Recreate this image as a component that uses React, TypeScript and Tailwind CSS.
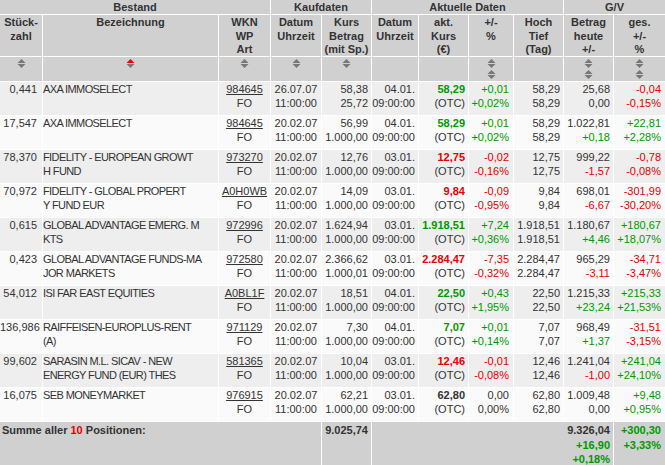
import React from "react";

type C = "g" | "r" | "d";
const col = (c?: C) =>
  c === "g" ? "text-[#009900]" : c === "r" ? "text-[#e60000]" : "text-[#333333]";

type Row = {
  n: string;
  name: string[];
  wkn: string;
  d1: string;
  k: [string, string];
  d2: string;
  akt: [string, C];
  ch: [string, string, C];
  hl: [string, string];
  bh: [string, C, string, C];
  ges: [string, string, C];
};

const rows: Row[] = [
  { n: "0,441", name: ["AXA IMMOSELECT"], wkn: "984645", d1: "26.07.07", k: ["58,38", "25,72"], d2: "04.01.", akt: ["58,29", "g"], ch: ["+0,01", "+0,02%", "g"], hl: ["58,29", "58,29"], bh: ["25,68", "d", "0,00", "d"], ges: ["-0,04", "-0,15%", "r"] },
  { n: "17,547", name: ["AXA IMMOSELECT"], wkn: "984645", d1: "20.02.07", k: ["56,99", "1.000,00"], d2: "04.01.", akt: ["58,29", "g"], ch: ["+0,01", "+0,02%", "g"], hl: ["58,29", "58,29"], bh: ["1.022,81", "d", "+0,18", "g"], ges: ["+22,81", "+2,28%", "g"] },
  { n: "78,370", name: ["FIDELITY - EUROPEAN GROWT", "H FUND"], wkn: "973270", d1: "20.02.07", k: ["12,76", "1.000,00"], d2: "03.01.", akt: ["12,75", "r"], ch: ["-0,02", "-0,16%", "r"], hl: ["12,75", "12,75"], bh: ["999,22", "d", "-1,57", "r"], ges: ["-0,78", "-0,08%", "r"] },
  { n: "70,972", name: ["FIDELITY - GLOBAL PROPERT", "Y FUND EUR"], wkn: "A0H0WB", d1: "20.02.07", k: ["14,09", "1.000,00"], d2: "03.01.", akt: ["9,84", "r"], ch: ["-0,09", "-0,95%", "r"], hl: ["9,84", "9,84"], bh: ["698,01", "d", "-6,67", "r"], ges: ["-301,99", "-30,20%", "r"] },
  { n: "0,615", name: ["GLOBAL ADVANTAGE EMERG. M", "KTS"], wkn: "972996", d1: "20.02.07", k: ["1.624,94", "1.000,00"], d2: "03.01.", akt: ["1.918,51", "g"], ch: ["+7,24", "+0,36%", "g"], hl: ["1.918,51", "1.918,51"], bh: ["1.180,67", "d", "+4,46", "g"], ges: ["+180,67", "+18,07%", "g"] },
  { n: "0,423", name: ["GLOBAL ADVANTAGE FUNDS-MA", "JOR MARKETS"], wkn: "972580", d1: "20.02.07", k: ["2.366,62", "1.000,01"], d2: "03.01.", akt: ["2.284,47", "r"], ch: ["-7,35", "-0,32%", "r"], hl: ["2.284,47", "2.284,47"], bh: ["965,29", "d", "-3,11", "r"], ges: ["-34,71", "-3,47%", "r"] },
  { n: "54,012", name: ["ISI FAR EAST EQUITIES"], wkn: "A0BL1F", d1: "20.02.07", k: ["18,51", "1.000,00"], d2: "04.01.", akt: ["22,50", "g"], ch: ["+0,43", "+1,95%", "g"], hl: ["22,50", "22,50"], bh: ["1.215,33", "d", "+23,24", "g"], ges: ["+215,33", "+21,53%", "g"] },
  { n: "136,986", name: ["RAIFFEISEN-EUROPLUS-RENT", "(A)"], wkn: "971129", d1: "20.02.07", k: ["7,30", "1.000,00"], d2: "04.01.", akt: ["7,07", "g"], ch: ["+0,01", "+0,14%", "g"], hl: ["7,07", "7,07"], bh: ["968,49", "d", "+1,37", "g"], ges: ["-31,51", "-3,15%", "r"] },
  { n: "99,602", name: ["SARASIN M.L. SICAV - NEW", "ENERGY FUND (EUR) THES"], wkn: "581365", d1: "20.02.07", k: ["10,04", "1.000,00"], d2: "03.01.", akt: ["12,46", "r"], ch: ["-0,01", "-0,08%", "r"], hl: ["12,46", "12,46"], bh: ["1.241,04", "d", "-1,00", "r"], ges: ["+241,04", "+24,10%", "g"] },
  { n: "16,075", name: ["SEB MONEYMARKET"], wkn: "976915", d1: "20.02.07", k: ["62,21", "1.000,00"], d2: "03.01.", akt: ["62,80", "d"], ch: ["0,00", "0,00%", "d"], hl: ["62,80", "62,80"], bh: ["1.009,48", "d", "0,00", "d"], ges: ["+9,48", "+0,95%", "g"] },
];

const SortIcon = ({ red }: { red?: boolean }) => (
  <svg width="9" height="9" viewBox="0 0 9 9" className="block">
    <path d="M0.5 4 L4.5 0 L8.5 4 Z" fill={red ? "#ee0000" : "#777777"} />
    <path d="M0.5 5 L4.5 9 L8.5 5 Z" fill="#777777" />
  </svg>
);

const H1 = ({ children, span }: { children: React.ReactNode; span: string }) => (
  <div className={`${span} bg-[#d0d0d0] text-center font-bold leading-[14px]`}>{children}</div>
);

const H2 = ({ lines }: { lines: string[] }) => (
  <div className="bg-[#d0d0d0] pt-px text-center font-bold leading-[13.5px]">
    {lines.map((l, i) => (
      <div key={i}>{l}</div>
    ))}
  </div>
);

const S = ({ n = 0, red }: { n?: number; red?: boolean }) => (
  <div className="flex flex-col items-center gap-[2px] bg-[#d0d0d0] pt-[2px]">
    {n >= 1 && <SortIcon red={red} />}
    {n >= 2 && <SortIcon />}
  </div>
);

export default function App() {
  return (
    <div className="h-[465px] w-[665px] overflow-hidden bg-white font-['Liberation_Sans',Arial,sans-serif] text-[11px] text-[#333333]">
      <div className="grid grid-cols-[42px_175px_51px_50px_49px_46px_49px_44px_49px_49px_51px] grid-rows-[14px_41px_24px_repeat(10,33px)_43px] gap-px bg-white">
        <H1 span="col-span-3">Bestand</H1>
        <H1 span="col-span-2">Kaufdaten</H1>
        <H1 span="col-span-4">Aktuelle Daten</H1>
        <H1 span="col-span-2">G/V</H1>

        <H2 lines={["Stück-", "zahl"]} />
        <H2 lines={["Bezeichnung"]} />
        <H2 lines={["WKN", "WP", "Art"]} />
        <H2 lines={["Datum", "Uhrzeit"]} />
        <H2 lines={["Kurs", "Betrag", "(mit Sp.)"]} />
        <H2 lines={["Datum", "Uhrzeit"]} />
        <H2 lines={["akt.", "Kurs", "(€)"]} />
        <H2 lines={["+/-", "%"]} />
        <H2 lines={["Hoch", "Tief", "(Tag)"]} />
        <H2 lines={["Betrag", "heute", "+/-"]} />
        <H2 lines={["ges.", "+/-", "%"]} />

        <S n={1} />
        <S n={1} red />
        <S n={1} />
        <S n={1} />
        <S n={1} />
        <S />
        <S />
        <S n={2} />
        <S />
        <S n={2} />
        <S n={2} />

        {rows.map((r, i) => {
          const bg = i % 2 === 0 ? "bg-[#eeeeee]" : "bg-[#fafafa]";
          const cell = `${bg} leading-[14px]`;
          return (
            <React.Fragment key={i}>
              <div className={`${cell} pr-[5px] text-right`}>{r.n}</div>
              <div className={`${cell} tracking-[-0.6px]`}>
                {r.name.map((l, j) => (
                  <div key={j}>{l}</div>
                ))}
              </div>
              <div className={`${cell} text-center`}>
                <div className="underline">{r.wkn}</div>
                <div>FO</div>
              </div>
              <div className={`${cell} text-center`}>
                <div>{r.d1}</div>
                <div>11:00:00</div>
              </div>
              <div className={`${cell} pr-[3px] text-right`}>
                <div>{r.k[0]}</div>
                <div>{r.k[1]}</div>
              </div>
              <div className={`${cell} pr-[3px] text-right`}>
                <div>{r.d2}</div>
                <div>09:00:00</div>
              </div>
              <div className={`${cell} pr-[3px] text-right`}>
                <div className={`font-bold ${col(r.akt[1])}`}>{r.akt[0]}</div>
                <div>(OTC)</div>
              </div>
              <div className={`${cell} pr-[4px] text-right ${col(r.ch[2])}`}>
                <div>{r.ch[0]}</div>
                <div>{r.ch[1]}</div>
              </div>
              <div className={`${cell} pr-[3px] text-right`}>
                <div>{r.hl[0]}</div>
                <div>{r.hl[1]}</div>
              </div>
              <div className={`${cell} pr-[3px] text-right`}>
                <div className={col(r.bh[1])}>{r.bh[0]}</div>
                <div className={col(r.bh[3])}>{r.bh[2]}</div>
              </div>
              <div className={`${cell} pr-[4px] text-right ${col(r.ges[2])}`}>
                <div>{r.ges[0]}</div>
                <div>{r.ges[1]}</div>
              </div>
            </React.Fragment>
          );
        })}

        <div className="col-span-4 bg-[#d0d0d0] pl-[2px] pt-[1px] font-bold leading-[14px]">
          Summe aller <span className="text-[#e60000]">10</span> Positionen:
        </div>
        <div className="bg-[#d0d0d0] pr-[3px] pt-[1px] text-right font-bold leading-[14px]">9.025,74</div>
        <div className="col-span-5 bg-[#d0d0d0] pr-[3px] pt-[1px] text-right font-bold leading-[14.5px]">
          <div>9.326,04</div>
          <div className="text-[#009900]">+16,90</div>
          <div className="text-[#009900]">+0,18%</div>
        </div>
        <div className="bg-[#d0d0d0] pr-[4px] pt-[1px] text-right font-bold leading-[14.5px] text-[#009900]">
          <div>+300,30</div>
          <div>+3,33%</div>
        </div>
      </div>
    </div>
  );
}
